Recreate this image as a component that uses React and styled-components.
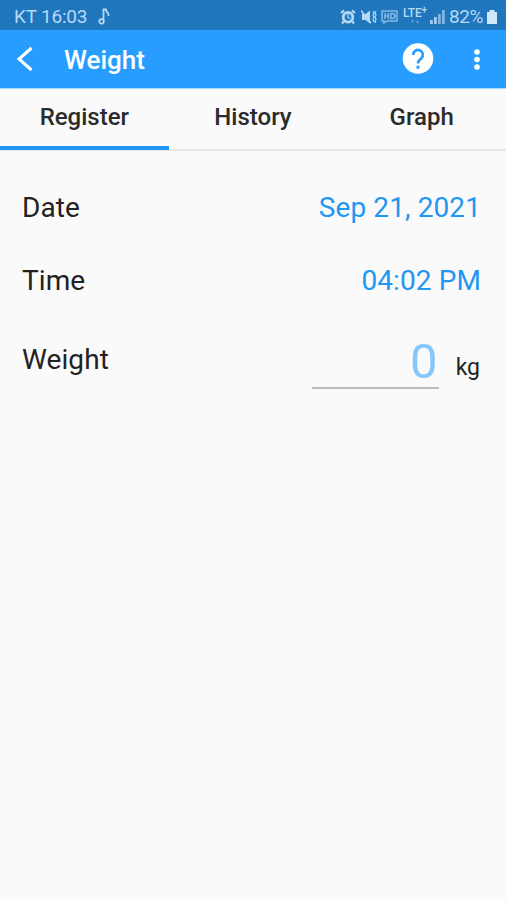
import React from "react";
import styled, { createGlobalStyle } from "styled-components";

const GlobalStyle = createGlobalStyle`
  * { box-sizing: border-box; }
  body { margin: 0; background: #fafafa; }
`;

const Screen = styled.div`
  width: 506px;
  height: 900px;
  display: flex;
  flex-direction: column;
  overflow: hidden;
  background: #fafafa;
  color: #222;
  font-family: Roboto, "Liberation Sans", sans-serif;
`;

const StatusBar = styled.header`
  height: 30px;
  padding: 3px 8px 0 14px;
  display: flex;
  align-items: center;
  background: #1f76bd;
  color: #b5d8f5;
  font-size: 19px;
  line-height: 26px;
`;

const Carrier = styled.span`
  letter-spacing: -0.2px;
  margin-right: 11px;
`;

const StatusIcons = styled.div`
  margin-left: auto;
  display: flex;
  align-items: center;
`;

const Battery = styled.span`
  margin: 0 3px 0 4px;
  letter-spacing: -0.4px;
`;

const Glyph = styled.svg`
  display: block;
  flex: none;
  margin-right: ${(p) => p.$gap || 0}px;
`;

const Toolbar = styled.div`
  height: 59px;
  padding: 0 21px 0 16px;
  display: flex;
  align-items: center;
  background: #279eff;
  border-bottom: 1px solid #a5dbfd;
  color: #fff;
`;

const IconButton = styled.button`
  padding: 0;
  border: 0;
  background: none;
  color: inherit;
  display: block;
  margin-right: ${(p) => p.$gap || 0}px;
`;

const Title = styled.h1`
  flex: 1;
  margin: 1px 0 0 30px;
  font-size: 26px;
  font-weight: 500;
  line-height: 32px;
`;

const Tabs = styled.nav`
  height: 62px;
  display: grid;
  grid-template-columns: repeat(3, 1fr);
  border-bottom: 2px solid #e8e8e8;
`;

const Tab = styled.button`
  height: 61px;
  padding: 0 0 1px;
  border: 0;
  border-bottom: 4px solid ${(p) => (p.$active ? "#2196f3" : "transparent")};
  background: none;
  color: #2b2b2b;
  font: 500 24px/56px Roboto, "Liberation Sans", sans-serif;
`;

const Form = styled.main`
  display: flex;
  flex-direction: column;
  padding: 20px 25px 0 22px;
`;

const Row = styled.div`
  height: ${(p) => p.$height}px;
  display: flex;
  align-items: center;
  justify-content: space-between;
  font-size: 28px;
  line-height: 34px;
`;

const Label = styled.span`
  letter-spacing: 0.1px;
`;

const Value = styled.span`
  color: #2196f3;
  letter-spacing: ${(p) => p.$tracking || 0}px;
`;

const Entry = styled.div`
  display: flex;
  align-items: flex-start;
`;

const Amount = styled.span`
  width: 127px;
  height: 58px;
  margin-right: 17px;
  padding-right: 1px;
  border-bottom: 2px solid #bdbdbd;
  color: #85c6fb;
  font-size: 49px;
  line-height: 61px;
  text-align: right;
`;

const Unit = styled.span`
  padding-top: 21px;
  margin-right: 1px;
  font-size: 23px;
  line-height: 32px;
`;

const MusicNote = () => (
  <Glyph width="14" height="18" viewBox="0 0 14 18" fill="none" stroke="currentColor" strokeWidth="1.8">
    <path d="M5.500 13V1.500h2.500c0 3 3.600 3 2.400 6.500" />
    <ellipse cx="3.500" cy="13.400" rx="2.200" ry="2.200" />
  </Glyph>
);

const Alarm = () => (
  <Glyph width="16" height="16" viewBox="0 0 16 16" fill="none" stroke="currentColor" $gap={5}>
    <circle cx="8" cy="8.300" r="4.800" strokeWidth="2.800" />
    <path d="M8 5.500v3l2 1" strokeWidth="1.300" />
    <path d="M1 4 4 1.400M15 4l-3-2.600M3.500 12.500 2 14.500M12.500 12.500l1.500 2" strokeWidth="2.200" />
  </Glyph>
);

const MutedSpeaker = () => (
  <Glyph width="16" height="16" viewBox="0 0 16 16" $gap={4}>
    <path d="M1 5h3.500L9 1.500v13L4.500 11H1z" fill="currentColor" />
    <path d="m0 1.500 10 12.500" fill="none" stroke="currentColor" strokeWidth="1.500" />
    <path d="m12 2 1 2-1 2 1 2-1 2 1 3M15 2l-1 2 1 2-1 2 1 2-1 4" fill="none" stroke="currentColor" strokeWidth="1.200" />
  </Glyph>
);

const HdVoice = () => (
  <Glyph width="18" height="15" viewBox="0 0 18 15" fill="none" stroke="#86bbe5" strokeWidth="1.500" $gap={3}>
    <path d="M3 2h13v10H6l-3 2v-2H1V2z" />
    <path d="M4 4v6M7.500 4v6M4 7h3.500M10 4.500v5h1.500q2.500 0 2.500-2.500T11.500 4.500z" />
  </Glyph>
);

const LteMark = styled.span`
  display: flex;
  flex-direction: column;
  align-items: center;
  width: 26px;
  margin: -2px 2px 0 0;
  font-size: 12px;
  font-weight: 500;
  line-height: 12px;
  letter-spacing: -0.2px;
  white-space: nowrap;
`;

const Plus = styled.sup`
  font-size: 10px;
  line-height: 0;
  vertical-align: 4px;
`;

const Signal = () => (
  <Glyph width="15" height="14" viewBox="0 0 15 14">
    <path d="M0 10h2.800v4H0zM4 7h2.800v7H4z" fill="#9fcbee" />
    <path d="M8 4h2.800v10H8zM12 0h2.800v14H12z" fill="#80b6e1" />
  </Glyph>
);

const BatteryIcon = () => (
  <Glyph width="12" height="14" viewBox="0 0 12 14">
    <path d="M3.500 0h5v2H11v12H1V2h2.500z" fill="#d1e8fa" />
  </Glyph>
);

const tabs = ["Register", "History", "Graph"];

export default function App() {
  return (
    <Screen>
      <GlobalStyle />
      <StatusBar>
        <Carrier>KT 16:03</Carrier>
        <MusicNote />
        <StatusIcons>
          <Alarm />
          <MutedSpeaker />
          <HdVoice />
          <LteMark>
            <span>LTE<Plus>+</Plus></span>
            <Glyph width="10" height="5" viewBox="0 0 10 5" fill="#69a5d5">
              <path d="M1 1h3L2.500 4zM6 4h3L7.500 1z" />
            </Glyph>
          </LteMark>
          <Signal />
          <Battery>82%</Battery>
          <BatteryIcon />
        </StatusIcons>
      </StatusBar>
      <Toolbar>
        <IconButton aria-label="Back">
          <Glyph width="18" height="26" viewBox="0 0 18 26" fill="none" stroke="currentColor" strokeWidth="3">
            <path d="M15.500 2 3 13l12.500 11" />
          </Glyph>
        </IconButton>
        <Title>Weight</Title>
        <IconButton aria-label="Help" $gap={35}>
          <Glyph width="32" height="32" viewBox="0 0 32 32">
            <circle cx="16" cy="15.500" r="15.300" fill="#fff" />
            <path d="M11.200 12a4.800 4.800 0 1 1 8.200 3.200c-2 2-3.400 2.500-3.400 5.300" fill="none" stroke="#279eff" strokeWidth="2.700" />
            <path d="M14.500 22.700h3v3h-3z" fill="#279eff" />
          </Glyph>
        </IconButton>
        <IconButton aria-label="More options">
          <Glyph width="16" height="24" viewBox="0 0 16 24" fill="currentColor">
            <circle cx="8" cy="5" r="2.800" />
            <circle cx="8" cy="12.500" r="2.800" />
            <circle cx="8" cy="20" r="2.800" />
          </Glyph>
        </IconButton>
      </Toolbar>
      <Tabs>
        {tabs.map((name, i) => (
          <Tab key={name} $active={i === 0}>{name}</Tab>
        ))}
      </Tabs>
      <Form>
        <Row $height={73}>
          <Label>Date</Label>
          <Value $tracking={0.1}>Sep 21, 2021</Value>
        </Row>
        <Row $height={73}>
          <Label>Time</Label>
          <Value $tracking={0.1}>04:02 PM</Value>
        </Row>
        <Row $height={86}>
          <Label>Weight</Label>
          <Entry>
            <Amount>0</Amount>
            <Unit>kg</Unit>
          </Entry>
        </Row>
      </Form>
    </Screen>
  );
}
